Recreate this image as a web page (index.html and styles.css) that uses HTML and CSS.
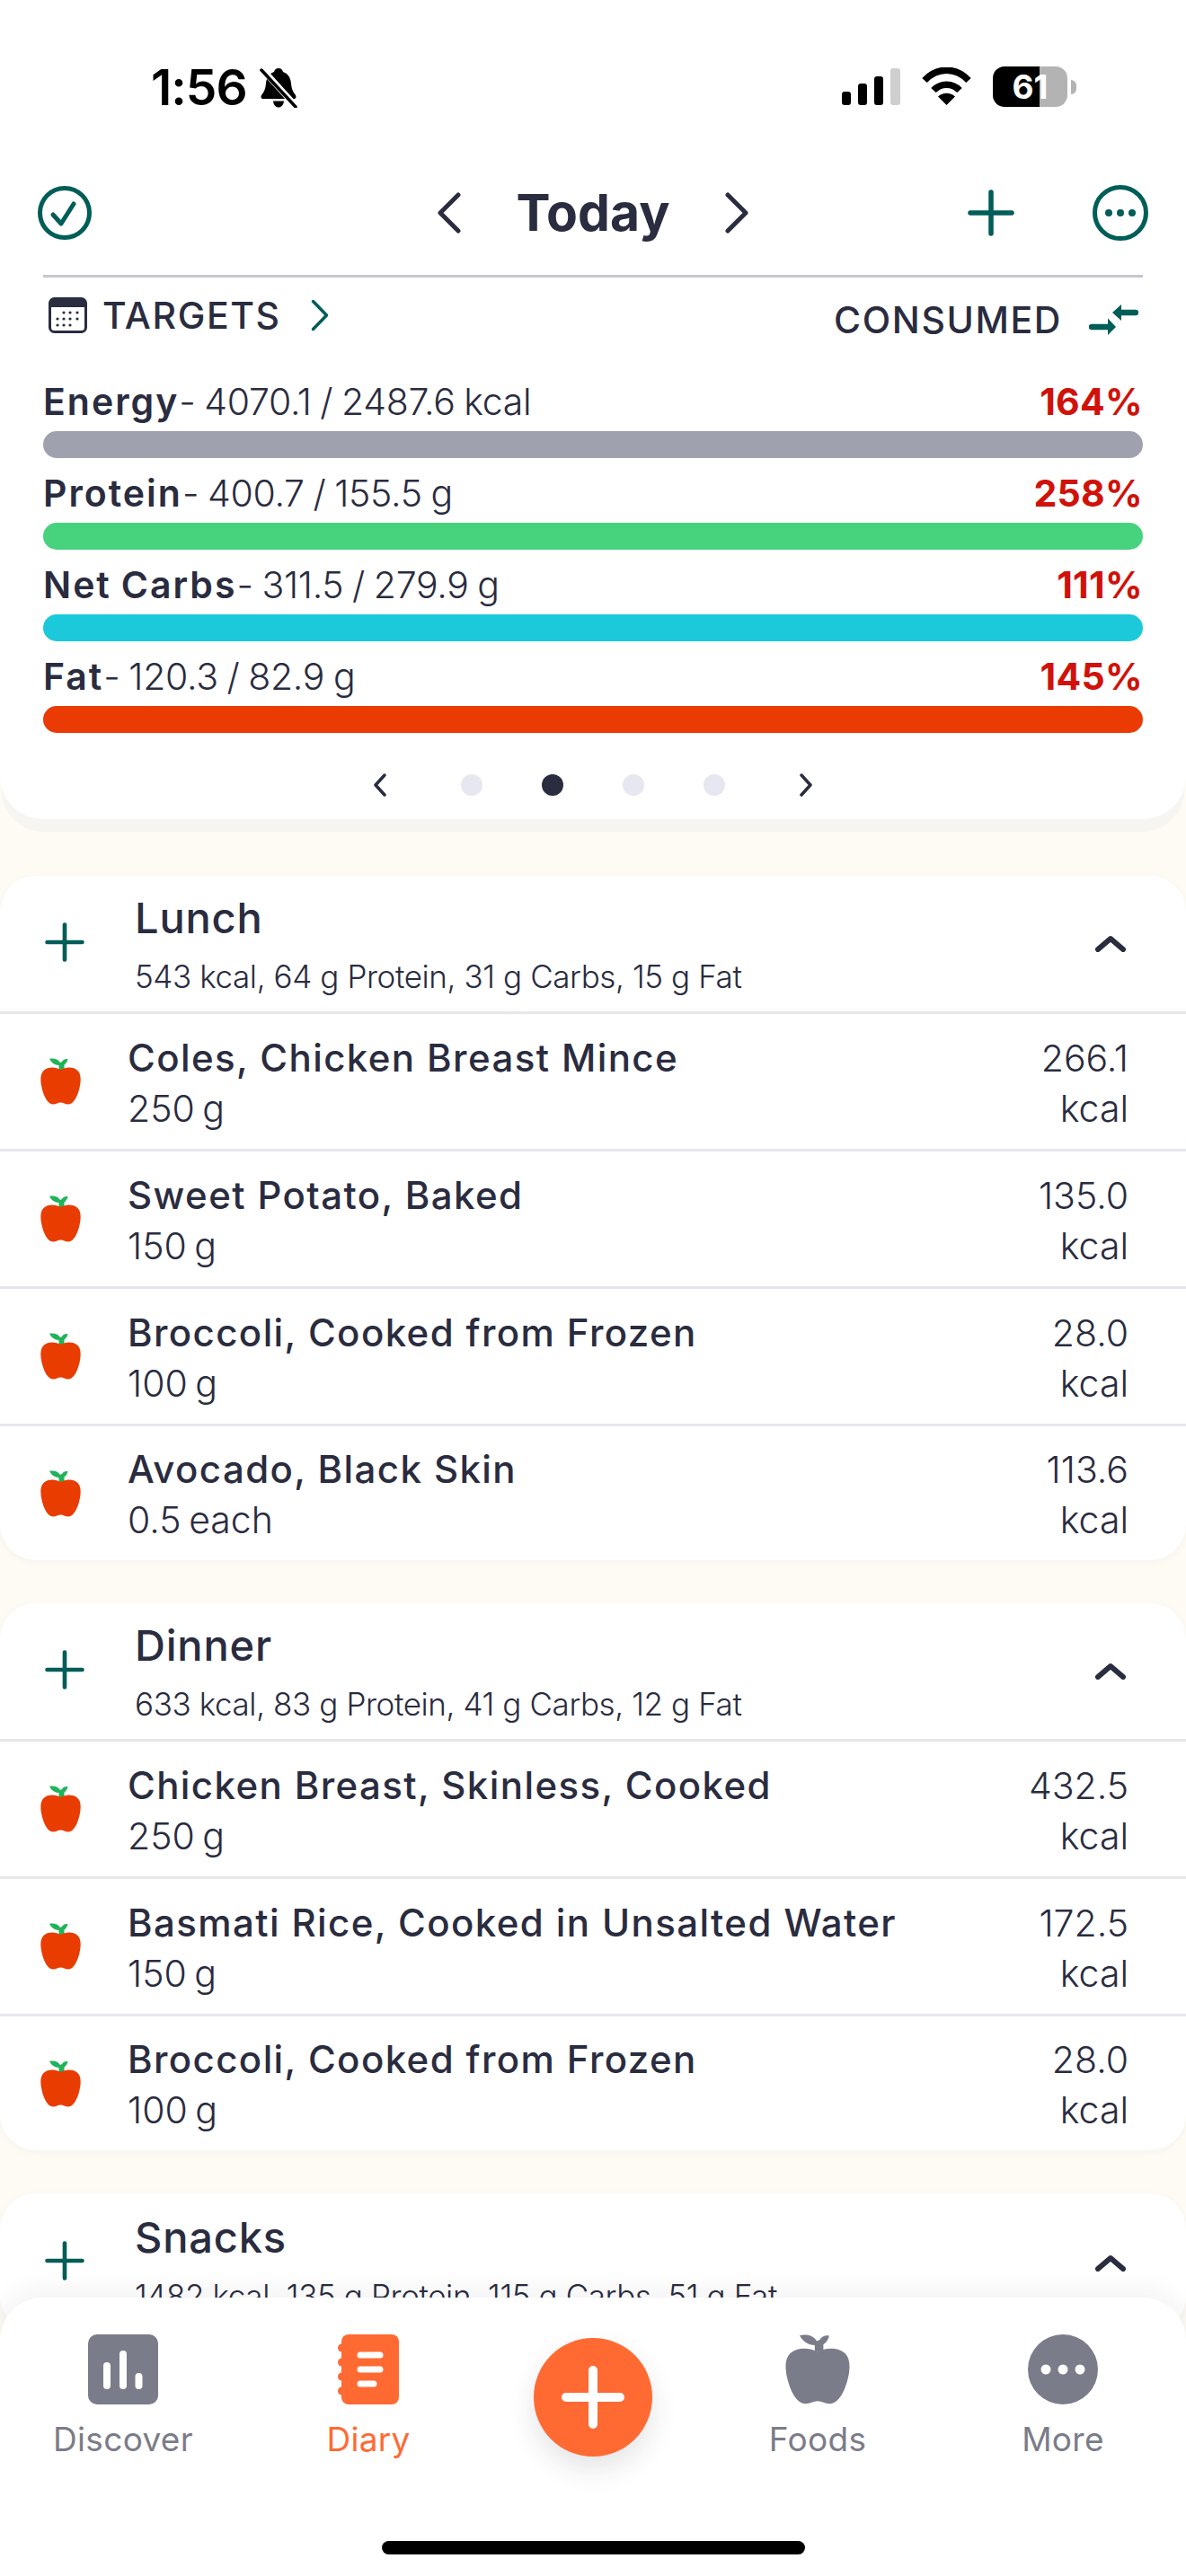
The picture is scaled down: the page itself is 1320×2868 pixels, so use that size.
FILE: index.html
```html
<!DOCTYPE html>
<html lang="en">
<head>
<meta charset="utf-8">
<title>Diary</title>
<link rel="stylesheet" href="styles.css">
</head>
<body>
<svg class="defs" width="0" height="0" aria-hidden="true">
  <symbol id="apple" viewBox="0 0 45 52" preserveAspectRatio="none">
    <path class="apple-leaf" d="M10 .8C14-.2 19.500 .5 22 5L24 4C25 1.500 28 .5 30.500 1 30 4 28 6.500 26.500 7.500V13H20.500L20.500 8C16 8 12 5 10 .8Z"/>
    <path d="M22.500 13C17 9.500 8 9.500 3.500 14-.5 18-.2 26 1.500 33 3.500 42 8 51.500 14 51.500 17.500 51.500 19.500 49.500 22.500 49.500 25.500 49.500 27.500 51.500 31 51.500 37 51.500 41.500 42 43.500 33 45.200 26 45.500 18 41.500 14 37 9.500 28 9.500 22.500 13Z"/>
  </symbol>
  <symbol id="plus" viewBox="0 0 52 52">
    <path d="M26 3V49M3 26H49" fill="none" stroke="currentColor" stroke-width="5.500" stroke-linecap="round"/>
  </symbol>
  <symbol id="collapse" viewBox="0 0 34 19">
    <path d="M3 16 17 4 31 16" fill="none" stroke="currentColor" stroke-width="6" stroke-linecap="round" stroke-linejoin="round"/>
  </symbol>
</svg>

<div class="screen">
  <section class="summary">
    <header class="status">
      <div class="status-left">
        <span class="clock">1:56</span>
        <svg class="bell" viewBox="0 0 42 45">
          <path d="M21 1C24 1 25.500 3 26 5 32 7 34.500 12 35 18 35.500 24 37 27 40 31 41 33 40.500 35 38 35H4C1.500 35 1 33 2 31 5 27 6.500 24 7 18 7.500 12 10 7 16 5 16.500 3 18 1 21 1Z"/>
          <path d="M15 37.500H27C26.500 42 24 44.500 21 44.500 18 44.500 15.500 42 15 37.500Z"/>
          <path class="bell-gap" d="M1 0 41 44"/>
          <path class="bell-slash" d="M2 3 40 44"/>
        </svg>
      </div>
      <div class="status-right">
        <svg class="signal" viewBox="0 0 65 41">
          <rect x="0" y="26" width="10" height="15" rx="3"/>
          <rect x="18" y="17" width="10" height="24" rx="3"/>
          <rect x="36" y="9" width="10" height="32" rx="3"/>
          <rect class="signal-off" x="54" y="0" width="11" height="41" rx="3"/>
        </svg>
        <svg class="wifi" viewBox="0 0 57 42">
          <path d="M4 14.500C18-.5 39-.5 53 14.500" fill="none" stroke="#000" stroke-width="7.500"/>
          <path d="M14 25.500C22 17 35 17 43 25.500" fill="none" stroke="#000" stroke-width="7.500"/>
          <path d="M28.500 42 19 32.500C24.500 27.500 32.500 27.500 38 32.500Z"/>
        </svg>
        <div class="battery"><span>61</span></div>
      </div>
    </header>

    <nav class="topbar">
      <div class="topbar-side">
        <svg class="ring-btn" viewBox="0 0 60 60">
          <circle cx="30" cy="30" r="27.500"/>
          <path d="M17 32 26 42 40 20"/>
        </svg>
      </div>
      <div class="date-nav">
        <svg class="date-chev" viewBox="0 0 26 46"><path d="M23 3 3 23 23 43"/></svg>
        <span class="date-label">Today</span>
        <svg class="date-chev" viewBox="0 0 26 46"><path d="M3 3 23 23 3 43"/></svg>
      </div>
      <div class="topbar-side topbar-actions">
        <svg class="add-icon"><use href="#plus"/></svg>
        <svg class="ring-btn" viewBox="0 0 62 62">
          <circle cx="31" cy="31" r="28.500"/>
          <circle class="ring-dot" cx="18" cy="31" r="4"/>
          <circle class="ring-dot" cx="31" cy="31" r="4"/>
          <circle class="ring-dot" cx="44" cy="31" r="4"/>
        </svg>
      </div>
    </nav>

    <div class="summary-body">
      <div class="targets-row">
        <div class="targets-left">
          <svg class="calendar" viewBox="0 0 43 40">
            <rect x="1.500" y="1.500" width="40" height="37" rx="5" fill="#fff" stroke="#2a2c3f" stroke-width="3"/>
            <path d="M1.500 11V6.500a5 5 0 0 1 5-5h30a5 5 0 0 1 5 5V11Z" fill="#2a2c3f"/>
            <g fill="#2a2c3f">
              <circle cx="17" cy="17" r="1.600"/><circle cx="24" cy="17" r="1.600"/><circle cx="32" cy="17" r="1.600"/>
              <circle cx="10" cy="24" r="1.600"/><circle cx="17" cy="24" r="1.600"/><circle cx="24" cy="24" r="1.600"/><circle cx="32" cy="24" r="1.600"/>
              <circle cx="10" cy="31" r="1.600"/><circle cx="17" cy="31" r="1.600"/><circle cx="24" cy="31" r="1.600"/>
            </g>
          </svg>
          <span class="targets-title">TARGETS</span>
          <svg class="targets-chev" viewBox="0 0 20 36"><path d="M2.500 2.500 17.500 18 2.500 33.500"/></svg>
        </div>
        <div class="targets-right">
          <span class="targets-title">CONSUMED</span>
          <svg class="swap" viewBox="0 0 55 34">
            <path d="M26 9 36 0V18Z" fill="#005d57"/>
            <path d="M35 9H52" stroke="#005d57" stroke-width="6.500" stroke-linecap="round"/>
            <path d="M30 25 21 15.500V34Z" fill="#005d57"/>
            <path d="M3 25H22" stroke="#005d57" stroke-width="6.500" stroke-linecap="round"/>
          </svg>
        </div>
      </div>

      <div class="macro">
        <div class="macro-text"><span><b>Energy</b>- 4070.1 / 2487.6 kcal</span><em>164%</em></div>
        <div class="bar bar-energy"></div>
      </div>
      <div class="macro">
        <div class="macro-text"><span><b>Protein</b>- 400.7 / 155.5 g</span><em>258%</em></div>
        <div class="bar bar-protein"></div>
      </div>
      <div class="macro">
        <div class="macro-text"><span><b>Net Carbs</b>- 311.5 / 279.9 g</span><em>111%</em></div>
        <div class="bar bar-carbs"></div>
      </div>
      <div class="macro">
        <div class="macro-text"><span><b>Fat</b>- 120.3 / 82.9 g</span><em>145%</em></div>
        <div class="bar bar-fat"></div>
      </div>

      <div class="pager">
        <svg class="pager-chev" viewBox="0 0 16 26"><path d="M13 2 3 13 13 24"/></svg>
        <i class="dot"></i>
        <i class="dot dot-on"></i>
        <i class="dot"></i>
        <i class="dot"></i>
        <svg class="pager-chev" viewBox="0 0 16 26"><path d="M3 2 13 13 3 24"/></svg>
      </div>
    </div>
  </section>

  <main class="meals">
    <section class="meal">
      <header class="meal-head">
        <svg class="meal-add"><use href="#plus"/></svg>
        <div class="meal-info">
          <h2>Lunch</h2>
          <p>543 kcal, 64 g Protein, 31 g Carbs, 15 g Fat</p>
        </div>
        <svg class="meal-toggle"><use href="#collapse"/></svg>
      </header>
      <div class="food"><svg class="food-icon"><use href="#apple"/></svg><div class="food-main"><h3>Coles, Chicken Breast Mince</h3><p>250 g</p></div><div class="food-kcal">266.1<br>kcal</div></div>
      <div class="food"><svg class="food-icon"><use href="#apple"/></svg><div class="food-main"><h3>Sweet Potato, Baked</h3><p>150 g</p></div><div class="food-kcal">135.0<br>kcal</div></div>
      <div class="food"><svg class="food-icon"><use href="#apple"/></svg><div class="food-main"><h3>Broccoli, Cooked from Frozen</h3><p>100 g</p></div><div class="food-kcal">28.0<br>kcal</div></div>
      <div class="food"><svg class="food-icon"><use href="#apple"/></svg><div class="food-main"><h3>Avocado, Black Skin</h3><p>0.5 each</p></div><div class="food-kcal">113.6<br>kcal</div></div>
    </section>

    <section class="meal">
      <header class="meal-head">
        <svg class="meal-add"><use href="#plus"/></svg>
        <div class="meal-info">
          <h2>Dinner</h2>
          <p>633 kcal, 83 g Protein, 41 g Carbs, 12 g Fat</p>
        </div>
        <svg class="meal-toggle"><use href="#collapse"/></svg>
      </header>
      <div class="food"><svg class="food-icon"><use href="#apple"/></svg><div class="food-main"><h3>Chicken Breast, Skinless, Cooked</h3><p>250 g</p></div><div class="food-kcal">432.5<br>kcal</div></div>
      <div class="food"><svg class="food-icon"><use href="#apple"/></svg><div class="food-main"><h3>Basmati Rice, Cooked in Unsalted Water</h3><p>150 g</p></div><div class="food-kcal">172.5<br>kcal</div></div>
      <div class="food"><svg class="food-icon"><use href="#apple"/></svg><div class="food-main"><h3>Broccoli, Cooked from Frozen</h3><p>100 g</p></div><div class="food-kcal">28.0<br>kcal</div></div>
    </section>

    <section class="meal">
      <header class="meal-head">
        <svg class="meal-add"><use href="#plus"/></svg>
        <div class="meal-info">
          <h2>Snacks</h2>
          <p>1482 kcal, 135 g Protein, 115 g Carbs, 51 g Fat</p>
        </div>
        <svg class="meal-toggle"><use href="#collapse"/></svg>
      </header>
    </section>
  </main>

  <footer class="tabbar">
    <div class="tab">
      <svg class="tab-icon" width="78" height="78" viewBox="0 0 78 78">
        <rect width="78" height="78" rx="10" fill="currentColor"/>
        <path d="M21 35V57M39 22V57M56.500 47V57" stroke="#fff" stroke-width="8" stroke-linecap="round"/>
      </svg>
      <span>Discover</span>
    </div>
    <div class="tab tab-on">
      <svg class="tab-icon" width="68" height="78" viewBox="0 0 68 78">
        <rect x="4" width="64" height="78" rx="8" fill="currentColor"/>
        <g fill="currentColor"><circle cx="4.500" cy="15" r="4.500"/><circle cx="4.500" cy="31" r="4.500"/><circle cx="4.500" cy="47" r="4.500"/><circle cx="4.500" cy="63" r="4.500"/></g>
        <path d="M25 23H47M25 39H47M25 55H40" stroke="#fff" stroke-width="7" stroke-linecap="round"/>
      </svg>
      <span>Diary</span>
    </div>
    <div class="fab-cell">
      <div class="fab">
        <svg viewBox="0 0 70 70" width="70" height="70"><path d="M35 5V65M5 35H65" stroke="#fff" stroke-width="10" stroke-linecap="round"/></svg>
      </div>
    </div>
    <div class="tab">
      <svg class="tab-icon tab-apple" width="72" height="78"><use href="#apple"/></svg>
      <span>Foods</span>
    </div>
    <div class="tab">
      <svg class="tab-icon" width="78" height="78" viewBox="0 0 78 78">
        <circle cx="39" cy="39" r="39" fill="currentColor"/>
        <circle cx="20" cy="39" r="5.500" fill="#fff"/><circle cx="39" cy="39" r="5.500" fill="#fff"/><circle cx="58" cy="39" r="5.500" fill="#fff"/>
      </svg>
      <span>More</span>
    </div>
    <div class="home-bar"></div>
  </footer>
</div>
</body>
</html>
```

FILE: styles.css
```css
* { box-sizing: border-box; }

html, body { margin: 0; padding: 0; }

body {
  width: 1320px;
  height: 2868px;
  overflow: hidden;
  font-family: "Inter", "Liberation Sans", sans-serif;
  color: #2a2c3f;
  background: #fefbf5;
}

.defs { position: absolute; }

.screen {
  position: relative;
  width: 1320px;
  height: 2868px;
  overflow: hidden;
  background: #fefbf5;
}

/* Top summary card */
.summary {
  height: 912px;
  background: #fff;
  border-radius: 0 0 48px 48px;
  box-shadow: 0 16px 0 -2px #f6f5f2;
}

.status {
  height: 190px;
  display: flex;
  justify-content: space-between;
  padding: 74px 132px 0 168px;
}

.status-left { display: flex; align-items: flex-start; gap: 14px; }

.clock {
  font-size: 55px;
  line-height: 46px;
  font-weight: 600;
  letter-spacing: -1px;
  color: #000;
}

.bell { width: 42px; height: 45px; margin-top: 1px; }
.bell-gap { stroke: #fff; stroke-width: 7; }
.bell-slash { stroke: #000; stroke-width: 3.5; stroke-linecap: round; }

.status-right { display: flex; align-items: flex-start; }
.signal { width: 65px; height: 41px; margin-top: 2px; }
.signal-off { fill: #cfcfcf; }
.wifi { width: 57px; height: 42px; margin: 1px 23px 0; }

.battery {
  position: relative;
  width: 83px;
  height: 45px;
  border-radius: 13px;
  background: linear-gradient(to right, #000 52px, #b3b3b3 52px);
  display: flex;
  align-items: center;
  justify-content: center;
  color: #fff;
  font-size: 37px;
  font-weight: 700;
  line-height: 45px;
}

.battery::after {
  content: "";
  position: absolute;
  right: -10px;
  top: 15px;
  width: 6px;
  height: 16px;
  border-radius: 0 6px 6px 0;
  background: #b3b3b3;
}

.topbar {
  height: 94px;
  display: grid;
  grid-template-columns: 1fr auto 1fr;
  align-items: center;
  padding: 0 42px;
}

.topbar-side { display: flex; align-items: center; }
.topbar-actions { justify-content: flex-end; gap: 87px; }

.ring-btn { width: 60px; height: 60px; fill: none; stroke: #005d57; stroke-width: 5; stroke-linecap: round; stroke-linejoin: round; }
.topbar-actions .ring-btn { width: 62px; height: 62px; }
.ring-dot { fill: #005d57; stroke: none; }

.add-icon { width: 52px; height: 52px; color: #005d57; }

.date-nav { display: flex; align-items: center; gap: 62px; }
.date-label { font-size: 57px; font-weight: 700; line-height: 70px; }
.date-chev { width: 26px; height: 46px; fill: none; stroke: #2a2c3f; stroke-width: 5; stroke-linecap: round; stroke-linejoin: round; }

.summary-body {
  margin: 22px 48px 0;
  border-top: 3px solid #c6c6d0;
}

.targets-row {
  height: 111px;
  display: flex;
  justify-content: space-between;
  align-items: flex-start;
}

.targets-left, .targets-right { display: flex; align-items: center; }
.targets-left { padding: 20px 0 0 6px; gap: 17px; }
.targets-right { padding: 25px 5px 0 0; gap: 30px; }

.calendar { width: 43px; height: 40px; }
.targets-title { font-size: 41px; line-height: 44px; font-weight: 500; letter-spacing: 1.6px; }
.targets-chev { width: 20px; height: 36px; margin-left: 16px; fill: none; stroke: #005d57; stroke-width: 3.500; stroke-linecap: round; stroke-linejoin: round; }
.swap { width: 55px; height: 34px; }

.macro { padding-bottom: 12px; }

.macro-text {
  height: 60px;
  display: flex;
  justify-content: space-between;
  align-items: flex-start;
  font-size: 41px;
  line-height: 54px;
  font-weight: 300;
  letter-spacing: -.3px;
  word-spacing: -1.5px;
}

.macro-text b { font-weight: 600; letter-spacing: 2px; }
.macro-text em { font-style: normal; font-weight: 700; color: #d0120a; letter-spacing: .3px; }

.bar { height: 30px; border-radius: 15px; }
.bar-energy { background: #a0a1ae; }
.bar-protein { background: #47d27d; }
.bar-carbs { background: #1cc9da; }
.bar-fat { background: #ea3b04; }

.pager {
  margin-top: 33px;
  height: 26px;
  display: flex;
  justify-content: center;
  align-items: center;
  gap: 66px;
}

.pager-chev { width: 16px; height: 26px; margin: 0 16px; fill: none; stroke: #2a2c3f; stroke-width: 3.500; stroke-linecap: round; stroke-linejoin: round; }
.dot { width: 24px; height: 24px; border-radius: 50%; background: #e6e7f0; }
.dot-on { background: #2a2c3f; }

/* Meal cards */
.meals {
  padding-top: 63px;
  display: flex;
  flex-direction: column;
  gap: 48px;
}

.meal {
  background: #fff;
  border-radius: 40px;
  box-shadow: 0 2px 10px rgba(40, 40, 60, .035);
  overflow: hidden;
}

.meal-head {
  height: 154px;
  display: flex;
  align-items: center;
  padding: 0 67px 0 50px;
  border-bottom: 3px solid #e6e7ec;
}

.meal:last-child .meal-head { border-bottom: 0; }

.meal-add { width: 44px; height: 44px; margin-bottom: 4px; color: #005d57; flex: none; }

.meal-info { flex: 1; margin-left: 56px; }
.meal-info h2 { margin: 0; font-size: 47px; line-height: 60px; font-weight: 500; letter-spacing: .8px; }
.meal-info p { margin: 13px 0 0; font-size: 35px; line-height: 44px; font-weight: 300; letter-spacing: -.4px; }

.meal-toggle { width: 34px; height: 19px; color: #2a2c3f; flex: none; }

.food {
  height: 153px;
  display: flex;
  align-items: center;
  padding: 0 64px 0 45px;
  border-bottom: 3px solid #e6e7ec;
}

.food:last-child { height: 149px; border-bottom: 0; }

.food-icon { width: 45px; height: 52px; flex: none; color: #e93c00; --leaf: #1fb35a; }
.apple-leaf { fill: var(--leaf, currentColor); }
.food-icon use, .tab-apple use { fill: currentColor; }

.food-main { flex: 1; margin: 3px 0 0 52px; }
.food-main h3 { margin: 0; font-size: 42px; line-height: 56px; font-weight: 500; letter-spacing: 1.4px; }
.food-main p { margin: 0; font-size: 41px; line-height: 56px; font-weight: 300; word-spacing: -3px; }

.food-kcal { margin-top: 3px; font-size: 41px; line-height: 56px; font-weight: 300; text-align: right; }

/* Bottom tab bar */
.tabbar {
  position: absolute;
  left: 0;
  right: 0;
  bottom: 0;
  height: 310px;
  padding-top: 41px;
  display: grid;
  grid-template-columns: 274px 272px 228px 272px 274px;
  align-items: start;
  background: #fff;
  border-radius: 48px 48px 0 0;
  box-shadow: 0 -8px 30px rgba(40, 40, 60, .06);
}

.tab {
  display: flex;
  flex-direction: column;
  align-items: center;
  color: #7b7c89;
  font-size: 37px;
  line-height: 44px;
  letter-spacing: .3px;
}

.tab-on { color: #ff6a33; }
.tab-icon { display: block; }
.tab span { margin-top: 17px; }

.fab-cell { display: flex; justify-content: center; padding-top: 4px; }

.fab {
  width: 132px;
  height: 132px;
  border-radius: 50%;
  background: #ff6a33;
  display: flex;
  align-items: center;
  justify-content: center;
  box-shadow: 0 14px 30px rgba(40, 40, 60, .12);
}

.home-bar {
  position: absolute;
  left: 425px;
  bottom: 24px;
  width: 471px;
  height: 15px;
  border-radius: 8px;
  background: #000;
}
```
